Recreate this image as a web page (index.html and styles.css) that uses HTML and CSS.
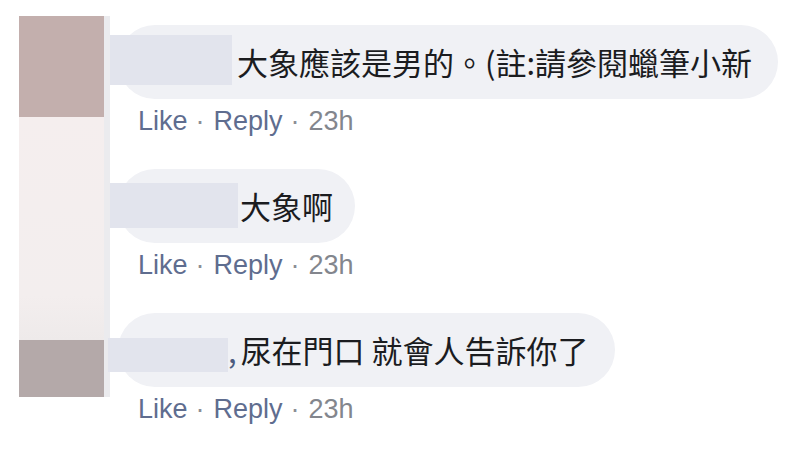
FILE: index.html
```html
<!DOCTYPE html>
<html lang="zh-Hant">
<head>
<meta charset="utf-8">
<title>Comments</title>
<link rel="stylesheet" href="styles.css">
</head>
<body>
<div class="page">
  <div class="avatar-strip">
    <div class="blk blk-top"></div>
    <div class="blk blk-mid"></div>
    <div class="blk blk-bot"></div>
  </div>
  <div class="divider"></div>
  <div class="comments">
    <div class="comment">
      <div class="bubble b1">
        <span class="mask m1"></span>
        <span class="text">大象應該是男的。(註:請參閱蠟筆小新</span>
      </div>
      <div class="actions"><span class="link">Like</span><span class="dot">·</span><span class="link">Reply</span><span class="dot">·</span><span class="time">23h</span></div>
    </div>
    <div class="comment">
      <div class="bubble b2">
        <span class="mask m2"></span>
        <span class="text">大象啊</span>
      </div>
      <div class="actions"><span class="link">Like</span><span class="dot">·</span><span class="link">Reply</span><span class="dot">·</span><span class="time">23h</span></div>
    </div>
    <div class="comment">
      <div class="bubble b3">
        <span class="mask m3"></span>
        <span class="text"><span class="tail">,</span>尿在門口 就會人告訴你了</span>
      </div>
      <div class="actions"><span class="link">Like</span><span class="dot">·</span><span class="link">Reply</span><span class="dot">·</span><span class="time">23h</span></div>
    </div>
  </div>
</div>
</body>
</html>
```
FILE: styles.css
```css
html, body {
  margin: 0;
  padding: 0;
  background: #ffffff;
}
body {
  width: 800px;
  height: 457px;
  overflow: hidden;
  font-family: "Noto Sans CJK TC", "Noto Sans", sans-serif;
}
.page {
  display: flex;
  align-items: flex-start;
  padding: 16px 0 0 19px;
}
.avatar-strip {
  width: 85px;
  height: 381px;
  display: flex;
  flex-direction: column;
}
.blk-top { height: 101px; background: #c3afad; }
.blk-mid { height: 223px; background: linear-gradient(#f5eeee, #f3eeee 80%, #eeeaea); }
.blk-bot { height: 57px; background: #b4a9a9; }
.divider {
  width: 6px;
  height: 381px;
  background: #ebebee;
}
.comments {
  display: flex;
  flex-direction: column;
  align-items: flex-start;
  padding: 9px 0 0 8px;
}
.comment {
  display: flex;
  flex-direction: column;
  align-items: flex-start;
  margin-bottom: 33px;
}
.bubble {
  position: relative;
  display: flex;
  align-items: center;
  height: 74px;
  border-radius: 37px;
  background: #f0f1f5;
  padding-right: 26px;
  box-sizing: border-box;
}
.b1 { padding-left: 119px; }
.b2 { padding-left: 122px; padding-right: 22px; }
.b3 { padding-left: 110px; }
.mask {
  position: absolute;
  background: #e2e4ed;
  filter: blur(0.6px);
}
.m1 { left: -8px; top: 10px; width: 122px; height: 50px; }
.m2 { left: -8px; top: 14px; width: 128px; height: 45px; }
.m3 { left: -10px; top: 25px; width: 120px; height: 34px; }
.text {
  position: relative;
  font-size: 31px;
  line-height: 40px;
  color: #1b1c1f;
  white-space: nowrap;
}
.tail {
  color: #4d5c80;
  margin-right: 4px;
}
.actions {
  margin-top: 7px;
  margin-left: 20px;
  font-family: "Liberation Sans", Arial, sans-serif;
  font-size: 27px;
  line-height: 30px;
  white-space: nowrap;
}
.link { color: #5f6d8f; }
.dot { color: #8b8e95; margin: 0 9px 0 8px; }
.time { color: #83868d; }
```
